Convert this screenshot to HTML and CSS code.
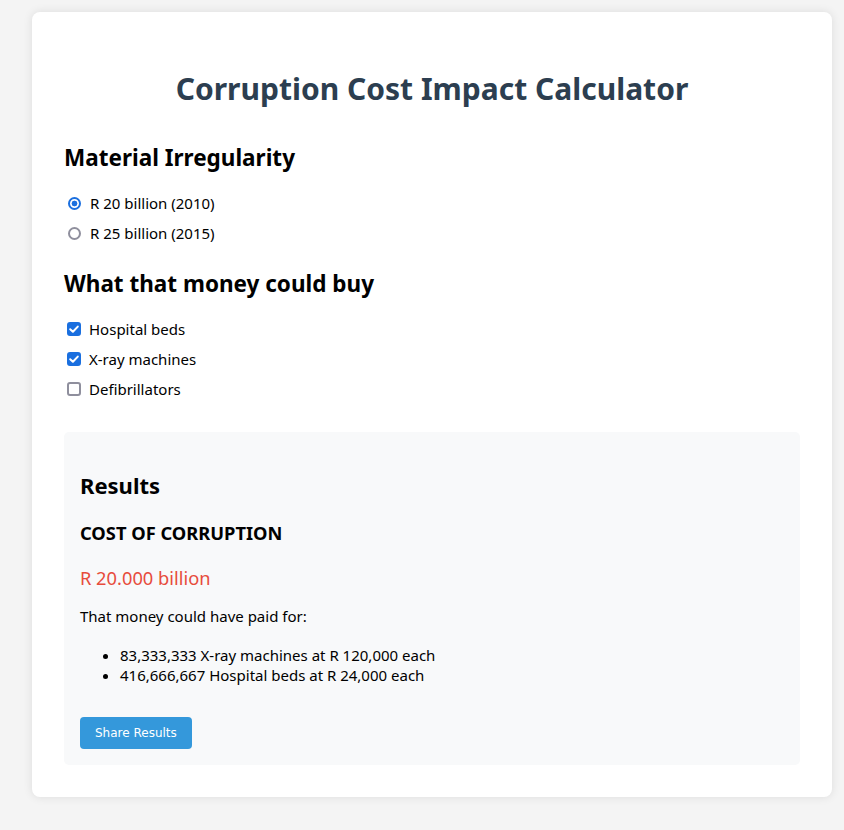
FILE: index.html
```html
<!DOCTYPE html>
<html lang="en">
<head>
<meta charset="utf-8">
<title>Corruption Cost Impact Calculator</title>
<link rel="stylesheet" href="styles.css">
</head>
<body>
<div class="card">
  <h1 class="title">Corruption Cost Impact Calculator</h1>

  <h2 class="section-title">Material Irregularity</h2>
  <div class="options">
    <label class="option">
      <input class="native" type="radio" name="amount" checked>
      <span class="radio"></span>
      <span>R 20 billion (2010)</span>
    </label>
    <label class="option">
      <input class="native" type="radio" name="amount">
      <span class="radio"></span>
      <span>R 25 billion (2015)</span>
    </label>
  </div>

  <h2 class="section-title">What that money could buy</h2>
  <div class="options">
    <label class="option">
      <input class="native" type="checkbox" checked>
      <span class="check"><svg viewBox="0 0 14 14" width="14" height="14"><path d="M3.2 7.2 L5.9 9.8 L10.8 4.6" fill="none" stroke="#fff" stroke-width="2" stroke-linecap="round" stroke-linejoin="round"/></svg></span>
      <span>Hospital beds</span>
    </label>
    <label class="option">
      <input class="native" type="checkbox" checked>
      <span class="check"><svg viewBox="0 0 14 14" width="14" height="14"><path d="M3.2 7.2 L5.9 9.8 L10.8 4.6" fill="none" stroke="#fff" stroke-width="2" stroke-linecap="round" stroke-linejoin="round"/></svg></span>
      <span>X-ray machines</span>
    </label>
    <label class="option">
      <input class="native" type="checkbox">
      <span class="check"><svg viewBox="0 0 14 14" width="14" height="14"><path d="M3.2 7.2 L5.9 9.8 L10.8 4.6" fill="none" stroke="#fff" stroke-width="2" stroke-linecap="round" stroke-linejoin="round"/></svg></span>
      <span>Defibrillators</span>
    </label>
  </div>

  <div class="results">
    <h2 class="results-title">Results</h2>
    <h3 class="cost-label">COST OF CORRUPTION</h3>
    <p class="cost-value">R 20.000 billion</p>
    <p class="paid-for">That money could have paid for:</p>
    <ul class="items">
      <li>83,333,333 X-ray machines at R 120,000 each</li>
      <li>416,666,667 Hospital beds at R 24,000 each</li>
    </ul>
    <button class="share-btn">Share Results</button>
  </div>
</div>
</body>
</html>
```

FILE: styles.css
```css
html, body {
  margin: 0;
  padding: 0;
}
body {
  background: #f4f4f4;
  font-family: "Noto Sans", "Open Sans", sans-serif;
  color: #000;
  padding: 12px 12px 33px 32px;
}
.card {
  width: 800px;
  box-sizing: border-box;
  background: #fff;
  border-radius: 8px;
  box-shadow: 0 0 10px rgba(0,0,0,0.1);
  padding: 32px;
}
.title {
  text-align: center;
  color: #2c3e50;
  font-size: 30px;
  line-height: 41px;
  margin: 24px 0 33px;
}
.section-title {
  font-size: 22.5px;
  line-height: 31px;
  margin: 25px 0 20px;
}
.options {
  display: flex;
  flex-direction: column;
  gap: 10px;
  font-size: 15px;
}
.option {
  display: flex;
  align-items: center;
  gap: 9px;
  padding-left: 4px;
  line-height: 20px;
}
.native {
  display: none;
}
.radio {
  width: 13px;
  height: 13px;
  box-sizing: border-box;
  border: 2px solid #8f8f9d;
  border-radius: 50%;
  background: #fff;
  flex: none;
}
.native:checked + .radio {
  border-color: #1a6fdf;
  background: radial-gradient(circle, #1a6fdf 0, #1a6fdf 2.6px, #fff 3.2px);
}
.check {
  width: 14px;
  height: 14px;
  box-sizing: border-box;
  border: 2px solid #8f8f9d;
  border-radius: 3px;
  background: #fff;
  flex: none;
  margin-left: -1px;
  margin-right: -1px;
  display: flex;
  align-items: center;
  justify-content: center;
}
.check svg {
  display: none;
  flex: none;
}
.native:checked + .check {
  background: #1a6fdf;
  border-color: #1a6fdf;
}
.native:checked + .check svg {
  display: block;
}
.results {
  margin-top: 33px;
  background: #f8f9fa;
  border-radius: 5px;
  padding: 16px;
}
.results-title {
  font-size: 22px;
  line-height: 30px;
  margin: 22px 0 20px;
}
.cost-label {
  font-size: 18.3px;
  line-height: 25px;
  margin: 20px 0;
}
.cost-value {
  color: #e74c3c;
  font-size: 18.3px;
  line-height: 25px;
  margin: 20px 0 16px;
}
.paid-for {
  font-size: 15px;
  line-height: 20px;
  margin: 16px 0 19px;
}
.items {
  font-size: 15px;
  margin: 19px 0 0;
  padding-left: 40px;
  line-height: 20px;
}
.share-btn {
  display: block;
  margin-top: 32px;
  background: #3498db;
  color: #fff;
  border: none;
  border-radius: 4px;
  padding: 9px 15px;
  font-family: "DejaVu Sans", sans-serif;
  font-size: 12px;
  line-height: 14px;
}
```
